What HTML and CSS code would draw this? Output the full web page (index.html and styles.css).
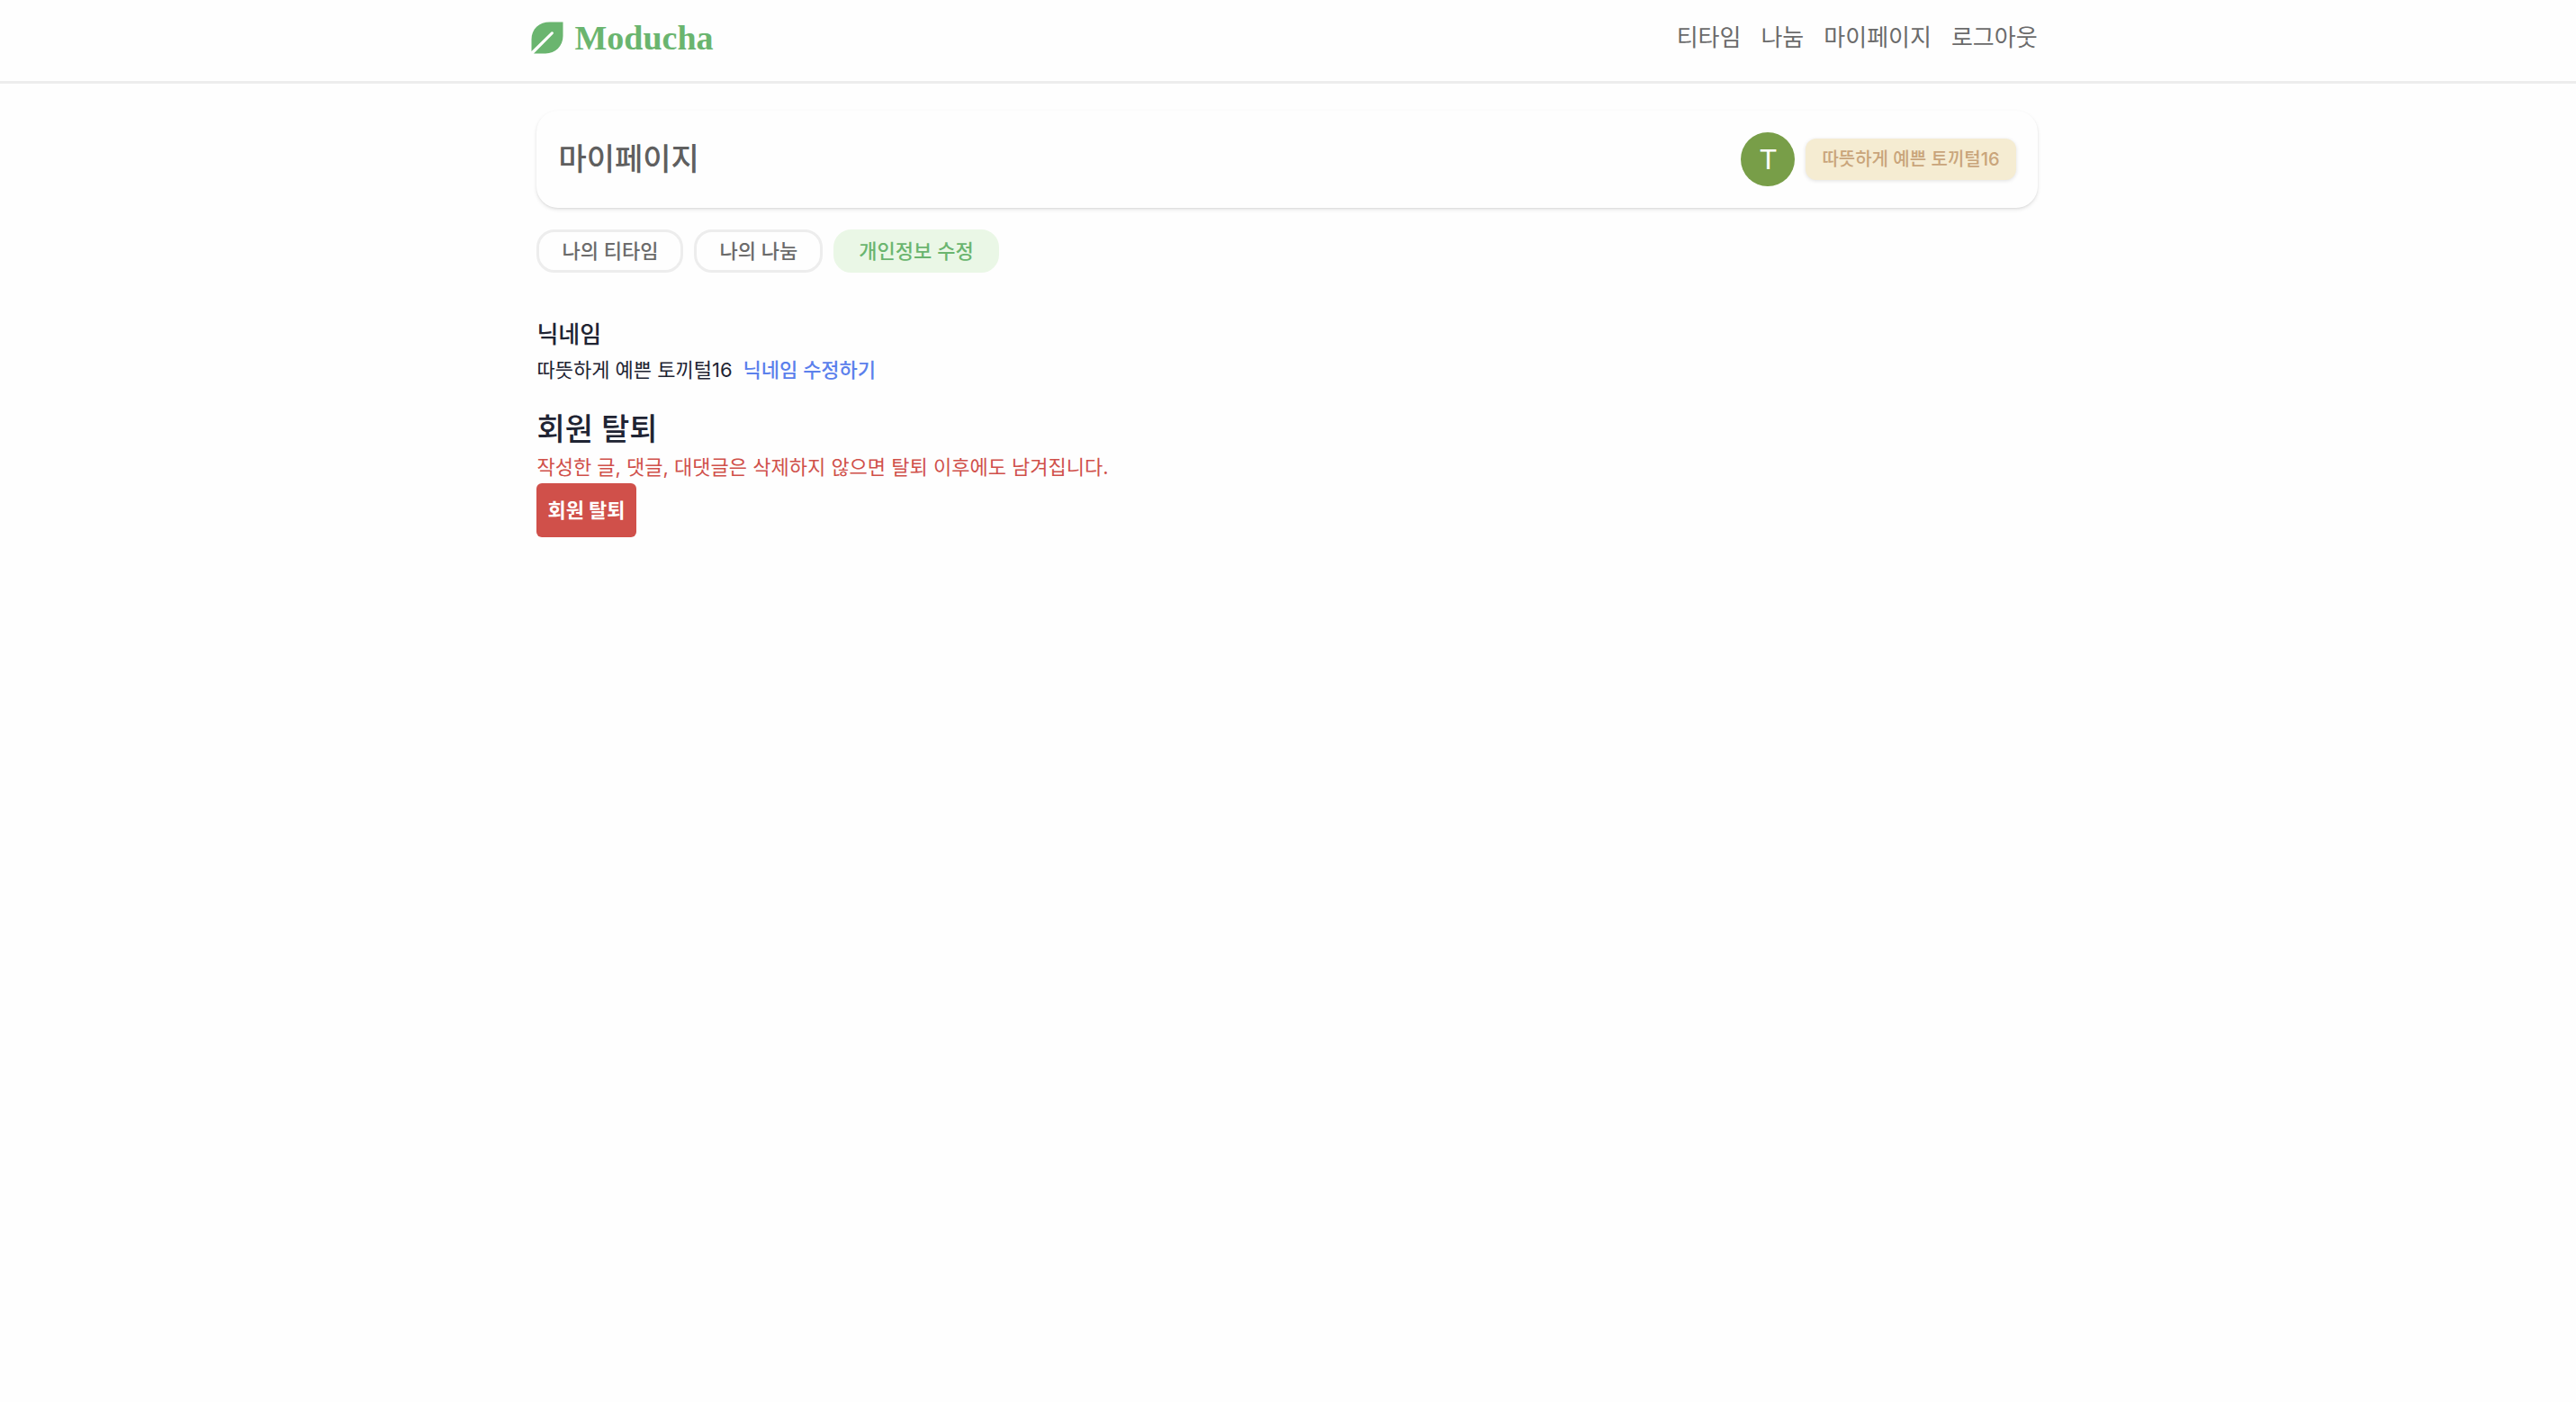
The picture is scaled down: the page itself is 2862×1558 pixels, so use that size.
FILE: index.html
```html
<!DOCTYPE html>
<html lang="ko">
<head>
<meta charset="utf-8">
<meta name="viewport" content="width=device-width, initial-scale=1">
<title>Moducha</title>
<link rel="stylesheet" href="styles.css">
</head>
<body>
<header class="site-header">
  <div class="container header-inner">
    <a class="logo" href="#">
      <svg class="logo-icon" viewBox="0 0 36 36" aria-hidden="true">
        <path d="M35.500 .5H21C9 .5 .5 8 .5 20V33L22.500 11.600Q23.700 10.800 24.600 11.700Q25.500 12.800 24.500 13.800L3 35.500H16C27 35.500 35.500 27 35.500 16Z" fill="currentColor"/>
      </svg>
      <span class="logo-text">Moducha</span>
    </a>
    <nav class="nav">
      <a href="#">티타임</a>
      <a href="#">나눔</a>
      <a href="#">마이페이지</a>
      <a href="#">로그아웃</a>
    </nav>
  </div>
</header>
<main class="container">
  <section class="profile-card">
    <h1 class="page-title">마이페이지</h1>
    <div class="profile">
      <span class="avatar">T</span>
      <span class="name-badge">따뜻하게 예쁜 토끼털16</span>
    </div>
  </section>
  <div class="tabs">
    <button class="tab" type="button">나의 티타임</button>
    <button class="tab" type="button">나의 나눔</button>
    <button class="tab tab-active" type="button">개인정보 수정</button>
  </div>
  <section class="nickname">
    <h2 class="nickname-title">닉네임</h2>
    <div class="nickname-row">
      <span>따뜻하게 예쁜 토끼털16</span>
      <button class="edit-button" type="button">닉네임 수정하기</button>
    </div>
  </section>
  <section class="withdraw">
    <h2 class="withdraw-title">회원 탈퇴</h2>
    <p class="warning">작성한 글, 댓글, 대댓글은 삭제하지 않으면 탈퇴 이후에도 남겨집니다.</p>
    <button class="withdraw-button" type="button">회원 탈퇴</button>
  </section>
</main>
</body>
</html>
```
FILE: styles.css
```css
* {
  box-sizing: border-box;
}

body {
  margin: 0;
  background: #fefefe;
  color: #1f2433;
  font-family: Inter, "Noto Sans CJK KR", sans-serif;
  font-size: 22px;
  line-height: 36px;
}

h1, h2, p {
  margin: 0;
}

button {
  border: 0;
  background: none;
  font: inherit;
  cursor: pointer;
}

a {
  color: inherit;
  text-decoration: none;
}

.container {
  width: 60%;
  margin: 0 auto;
  padding: 0 26px 0 24px;
}

.site-header {
  border-bottom: 3px solid #ededed;
}

.header-inner {
  display: flex;
  align-items: center;
  justify-content: space-between;
  padding: 18px 26px 24px 18px;
}

.logo {
  display: flex;
  align-items: center;
  gap: 12px;
  color: #6ab56f;
}

.logo-icon {
  width: 36px;
  height: 36px;
}

.logo-text {
  font-family: "Liberation Serif", serif;
  font-size: 38px;
  font-weight: 700;
  line-height: 48px;
}

.nav {
  display: flex;
  gap: 22px;
  color: #6b6b6b;
  font-size: 26px;
  font-weight: 400;
}

.profile-card {
  display: flex;
  align-items: center;
  justify-content: space-between;
  margin-top: 30px;
  padding: 24px;
  border-radius: 24px;
  box-shadow: 0 2px 4px rgba(0, 0, 0, 0.1), 0 1px 2px rgba(0, 0, 0, 0.06);
}

.page-title {
  color: #5f5f5f;
  font-size: 34px;
  font-weight: 500;
  line-height: 48px;
}

.profile {
  display: flex;
  align-items: center;
  gap: 12px;
}

.avatar {
  width: 60px;
  height: 60px;
  border-radius: 50%;
  background: #789e48;
  color: #fff;
  font-family: Roboto, sans-serif;
  font-size: 32px;
  line-height: 60px;
  text-align: center;
}

.name-badge {
  padding: 0 18px;
  border-radius: 12px;
  background: #f5ecd2;
  box-shadow: 0 1px 4px rgba(0, 0, 0, 0.12);
  color: #c9a57b;
  font-size: 20px;
  font-weight: 500;
  line-height: 46px;
}

.tabs {
  display: flex;
  gap: 12px;
  margin-top: 24px;
}

.tab {
  padding: 0 25px;
  border: 3px solid #ededed;
  border-radius: 20px;
  color: #6b6b6b;
  font-weight: 500;
  line-height: 42px;
}

.tab-active {
  border-color: #eaf7e6;
  background: #eaf7e6;
  color: #6ab56f;
}

.nickname {
  margin-top: 48px;
}

.nickname-title {
  font-size: 26px;
  font-weight: 500;
  line-height: 42px;
}

.nickname-row {
  display: flex;
  gap: 12px;
}

.edit-button {
  padding: 0;
  color: #5b80ec;
  font-weight: 500;
}

.withdraw {
  margin-top: 24px;
}

.withdraw-title {
  font-size: 34px;
  font-weight: 500;
  line-height: 48px;
}

.warning {
  color: #d0504a;
}

.withdraw-button {
  display: block;
  padding: 12px;
  border-radius: 6px;
  background: #d0504a;
  color: #fff;
  font-weight: 700;
}
```
